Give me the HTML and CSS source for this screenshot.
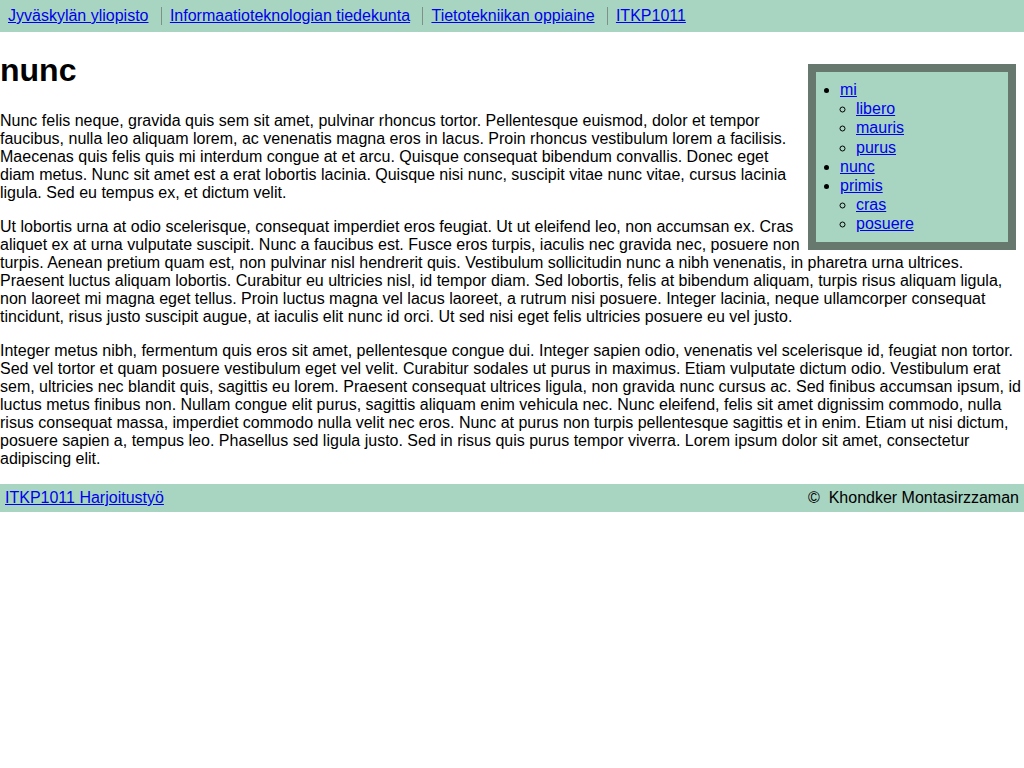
FILE: index.html
```html
<!DOCTYPE html>
<html lang="fi">
<head>
<meta charset="utf-8">
<title>nunc</title>
<link rel="stylesheet" href="styles.css">
</head>
<body>
<header class="topbar">
  <ul class="crumbs">
    <li><a href="#">Jyväskylän yliopisto</a></li>
    <li><a href="#">Informaatioteknologian tiedekunta</a></li>
    <li><a href="#">Tietotekniikan oppiaine</a></li>
    <li><a href="#">ITKP1011</a></li>
  </ul>
</header>
<main class="content">
  <aside class="toc">
    <ul class="toc-list">
      <li><a href="#">mi</a>
        <ul class="toc-sub">
          <li><a href="#">libero</a></li>
          <li><a href="#">mauris</a></li>
          <li><a href="#">purus</a></li>
        </ul>
      </li>
      <li><a href="#">nunc</a></li>
      <li><a href="#">primis</a>
        <ul class="toc-sub">
          <li><a href="#">cras</a></li>
          <li><a href="#">posuere</a></li>
        </ul>
      </li>
    </ul>
  </aside>
  <h1 class="title">nunc</h1>
  <p class="para">Nunc felis neque, gravida quis sem sit amet, pulvinar rhoncus tortor. Pellentesque euismod, dolor et tempor faucibus, nulla leo aliquam lorem, ac venenatis magna eros in lacus. Proin rhoncus vestibulum lorem a facilisis. Maecenas quis felis quis mi interdum congue at et arcu. Quisque consequat bibendum convallis. Donec eget diam metus. Nunc sit amet est a erat lobortis lacinia. Quisque nisi nunc, suscipit vitae nunc vitae, cursus lacinia ligula. Sed eu tempus ex, et dictum velit.</p>
  <p class="para">Ut lobortis urna at odio scelerisque, consequat imperdiet eros feugiat. Ut ut eleifend leo, non accumsan ex. Cras aliquet ex at urna vulputate suscipit. Nunc a faucibus est. Fusce eros turpis, iaculis nec gravida nec, posuere non turpis. Aenean pretium quam est, non pulvinar nisl hendrerit quis. Vestibulum sollicitudin nunc a nibh venenatis, in pharetra urna ultrices. Praesent luctus aliquam lobortis. Curabitur eu ultricies nisl, id tempor diam. Sed lobortis, felis at bibendum aliquam, turpis risus aliquam ligula, non laoreet mi magna eget tellus. Proin luctus magna vel lacus laoreet, a rutrum nisi posuere. Integer lacinia, neque ullamcorper consequat tincidunt, risus justo suscipit augue, at iaculis elit nunc id orci. Ut sed nisi eget felis ultricies posuere eu vel justo.</p>
  <p class="para">Integer metus nibh, fermentum quis eros sit amet, pellentesque congue dui. Integer sapien odio, venenatis vel scelerisque id, feugiat non tortor. Sed vel tortor et quam posuere vestibulum eget vel velit. Curabitur sodales ut purus in maximus. Etiam vulputate dictum odio. Vestibulum erat sem, ultricies nec blandit quis, sagittis eu lorem. Praesent consequat ultrices ligula, non gravida nunc cursus ac. Sed finibus accumsan ipsum, id luctus metus finibus non. Nullam congue elit purus, sagittis aliquam enim vehicula nec. Nunc eleifend, felis sit amet dignissim commodo, nulla risus consequat massa, imperdiet commodo nulla velit nec eros. Nunc at purus non turpis pellentesque sagittis et in enim. Etiam ut nisi dictum, posuere sapien a, tempus leo. Phasellus sed ligula justo. Sed in risus quis purus tempor viverra. Lorem ipsum dolor sit amet, consectetur adipiscing elit.</p>
</main>
<footer class="footer">
  <a href="#">ITKP1011 Harjoitustyö</a>
  <span class="copy">©&nbsp; Khondker Montasirzzaman</span>
</footer>
</body>
</html>
```

FILE: styles.css
```css
html, body {
  margin: 0;
  padding: 0;
  background: #ffffff;
}
body {
  font-family: "Liberation Sans", Arial, sans-serif;
  font-size: 16px;
  color: #000000;
}
a {
  color: #0000ee;
}
.topbar {
  background: #a8d4c2;
  height: 32px;
  display: flex;
  align-items: center;
}
.crumbs {
  list-style: none;
  margin: 0;
  padding: 0;
  display: flex;
  line-height: 18px;
}
.crumbs li {
  padding: 0 8px;
  border-left: 1px solid #7f9089;
  margin-left: 4.4px;
}
.crumbs li:first-child {
  border-left: none;
  margin-left: 0;
}
.content {
  display: flow-root;
}
.toc {
  float: right;
  width: 192px;
  margin: 32px 8px 0 8px;
  border: 8px solid #67786f;
  background: #a8d4c2;
}
.toc-list {
  margin: 8px 0;
  padding-left: 24px;
  line-height: 19.2px;
  list-style: disc;
}
.toc-sub {
  margin: 0;
  padding-left: 16px;
  list-style: circle;
}
.title {
  font-size: 32px;
  font-weight: bold;
  margin: 20px 0 23px 0;
  line-height: 37px;
}
.para {
  margin: 16px 0;
  line-height: 18px;
}
.footer {
  background: #a8d4c2;
  display: flex;
  justify-content: space-between;
  padding: 5px;
  line-height: 18px;
}
.copy {
  color: #000000;
}
```
